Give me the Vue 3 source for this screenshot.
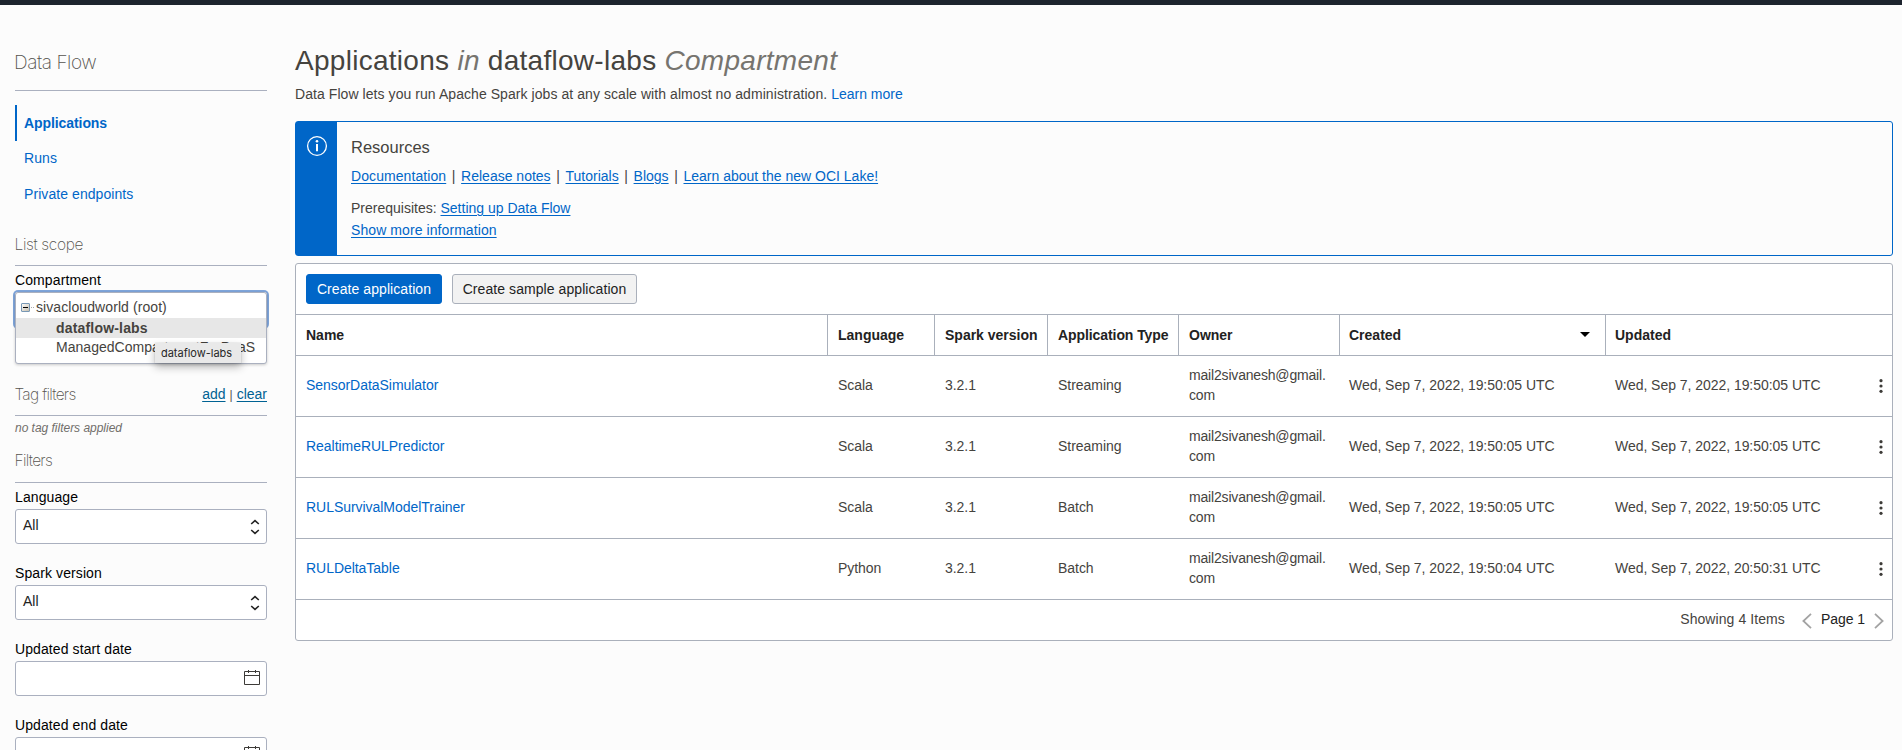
<script setup>
const nav = [
  { label: 'Applications', active: true },
  { label: 'Runs' },
  { label: 'Private endpoints' },
]
const resources = [
  { label: 'Documentation', cls: 'wide' },
  { label: 'Release notes' },
  { label: 'Tutorials' },
  { label: 'Blogs' },
  { label: 'Learn about the new OCI Lake!' },
]
const columns = [
  { label: 'Name' },
  { label: 'Language' },
  { label: 'Spark version' },
  { label: 'Application Type', cls: 'tight' },
  { label: 'Owner' },
  { label: 'Created', sorted: true },
  { label: 'Updated' },
]
const rows = [
  { name: 'SensorDataSimulator', lang: 'Scala', type: 'Streaming', created: '19:50:05', updated: '19:50:05' },
  { name: 'RealtimeRULPredictor', lang: 'Scala', type: 'Streaming', created: '19:50:05', updated: '19:50:05' },
  { name: 'RULSurvivalModelTrainer', lang: 'Scala', type: 'Batch', created: '19:50:05', updated: '19:50:05' },
  { name: 'RULDeltaTable', lang: 'Python', type: 'Batch', created: '19:50:04', updated: '20:50:31' },
]
const selects = ['Language', 'Spark version']
const dates = ['Updated start date', 'Updated end date']
</script>

<template>
  <div class="page">
    <div class="topbar"></div>
    <div class="layout">
      <aside class="sidebar">
        <h2 class="product">Data Flow</h2>
        <nav class="nav">
          <a v-for="n in nav" :key="n.label" class="nav-item" :class="{ active: n.active }">{{ n.label }}</a>
        </nav>

        <h3 class="section scope">List scope</h3>
        <label class="label comp-label">Compartment</label>
        <div class="compartment">
          <div class="tree">
            <div class="node root">
              <svg class="toggle" width="14" height="9" viewBox="0 0 14 9">
                <defs>
                  <linearGradient id="tg" x1="0" y1="0" x2="1" y2="1">
                    <stop offset="0" stop-color="#fff" />
                    <stop offset="1" stop-color="#c3bbaa" />
                  </linearGradient>
                </defs>
                <rect x=".5" y=".5" width="8" height="8" rx=".5" fill="url(#tg)" stroke="#7898b5" />
                <path d="M2 4.5h5" stroke="#000" />
                <path d="M10 4.5h1M12 4.5h1" stroke="#aaa" />
              </svg>
              <span>sivacloudworld (root)</span>
            </div>
            <div class="node child selected">dataflow-labs</div>
            <div class="node child">ManagedCompartmentForPaaS</div>
            <div class="tooltip">dataflow-labs</div>
          </div>
        </div>

        <div class="section tags">
          <h3>Tag filters</h3>
          <span class="tag-actions"><a>add</a><i>|</i><a>clear</a></span>
        </div>
        <div class="none">no tag filters applied</div>

        <h3 class="section filters">Filters</h3>
        <div v-for="s in selects" :key="s" class="field">
          <label class="label">{{ s }}</label>
          <div class="control">
            <span>All</span>
            <svg class="updown" width="10" height="16" viewBox="0 0 10 16" fill="none" stroke="#222" stroke-width="1.6">
              <path d="M1.2 5 5 1.6 8.8 5M1.2 11 5 14.4 8.8 11" />
            </svg>
          </div>
        </div>
        <div v-for="d in dates" :key="d" class="field">
          <label class="label">{{ d }}</label>
          <div class="control">
            <svg class="cal" width="16" height="15" viewBox="0 0 16 15" fill="none" stroke="#3d3b38">
              <path d="M.5 1.5h15v13H.5zM.5 5.5h15M4.5 0v3M11.5 0v3" />
            </svg>
          </div>
        </div>
      </aside>

      <main class="main">
        <h1 class="title">
          Applications <em>in</em> dataflow-labs <em>Compartment</em>
        </h1>
        <p class="desc"><span>Data Flow lets you run Apache Spark jobs at any scale with almost no administration.</span> <a>Learn more</a></p>

        <section class="info">
          <div class="strip">
            <svg width="22" height="22" viewBox="0 0 22 22">
              <circle cx="11" cy="11" r="9.4" fill="none" stroke="#fff" stroke-width="1.3" />
              <path d="M11 9v7.2" stroke="#fff" stroke-width="2" />
              <circle cx="11" cy="6.2" r="1.3" fill="#fff" />
            </svg>
          </div>
          <div class="info-body">
            <h4>Resources</h4>
            <div class="links">
              <template v-for="(r, i) in resources" :key="r.label">
                <i v-if="i">|</i><a :class="r.cls">{{ r.label }}</a>
              </template>
            </div>
            <div class="prereq">Prerequisites: <a>Setting up Data Flow</a></div>
            <div class="more"><a class="wide">Show more information</a></div>
          </div>
        </section>

        <section class="table">
          <div class="toolbar">
            <button class="btn primary">Create application</button>
            <button class="btn">Create sample application</button>
          </div>
          <div class="grid head">
            <div v-for="c in columns" :key="c.label" class="th">
              <span :class="c.cls">{{ c.label }}</span>
              <svg v-if="c.sorted" class="sort" width="10" height="5" viewBox="0 0 10 5"><path d="M0 0h10L5 5z" /></svg>
            </div>
          </div>
          <div v-for="r in rows" :key="r.name" class="grid row">
            <div><a>{{ r.name }}</a></div>
            <div>{{ r.lang }}</div>
            <div>3.2.1</div>
            <div>{{ r.type }}</div>
            <div><span class="mail">mail2sivanesh@gmail.<wbr>com</span></div>
            <div>Wed, Sep 7, 2022, {{ r.created }} UTC</div>
            <div class="last">
              <span>Wed, Sep 7, 2022, {{ r.updated }} UTC</span>
              <svg class="kebab" width="4" height="14" viewBox="0 0 4 14" fill="#3d3b38">
                <circle cx="2" cy="1.7" r="1.6" /><circle cx="2" cy="7" r="1.6" /><circle cx="2" cy="12.3" r="1.6" />
              </svg>
            </div>
          </div>
          <div class="foot">
            <span class="showing">Showing 4 Items</span>
            <svg width="10" height="16" viewBox="0 0 10 16" fill="none" stroke="#a3a3a3" stroke-width="1.8"><path d="M9 .8 1.4 8 9 15.2" /></svg>
            <span class="pg">Page 1</span>
            <svg width="10" height="16" viewBox="0 0 10 16" fill="none" stroke="#a3a3a3" stroke-width="1.8"><path d="M1 .8 8.6 8 1 15.2" /></svg>
          </div>
        </section>
      </main>
    </div>
  </div>
</template>

<style>
html, body { margin: 0; overflow: hidden; background: #fcfcfc; }
</style>

<style scoped>
* { box-sizing: border-box; }
.page {
  height: 750px;
  overflow: hidden;
  background: #fcfcfc;
  color: #45433e;
  font: 14px/20px "Liberation Sans", Arial, sans-serif;
}
h1, h2, h3, h4, p { margin: 0; font-weight: 400; }
a { color: #0066c8; }
.topbar { height: 5px; background: #1d242e; }
.layout { display: flex; padding-left: 15px; }
.sidebar { width: 252px; flex: none; }

.product {
  height: 86px;
  padding-top: 43px;
  border-bottom: 1px solid #aab0bf;
  font: 200 19px/30px Inter, "Liberation Sans", sans-serif;
  letter-spacing: -0.45px;
  text-indent: -1px;
  color: #55534e;
}
.nav { padding-top: 14px; }
.nav-item {
  display: block;
  height: 35.5px;
  padding-left: 9px;
  line-height: 35px;
  letter-spacing: 0.07px;
}
.nav-item:last-child { line-height: 36px; }
.nav-item.active { border-left: 2px solid #0066c8; padding-left: 7px; line-height: 37px; font-weight: 700; letter-spacing: -0.08px; }
.section {
  height: 40px;
  border-bottom: 1px solid #aab0bf;
}
.section, .section h3 {
  font: 200 15.5px/20px Inter, "Liberation Sans", sans-serif;
  letter-spacing: -0.7px;
  text-indent: -0.5px;
  color: #55534e;
}
.section.scope { margin-top: 15.5px; height: 39px; padding-top: 8px; letter-spacing: -0.35px; }
.label { display: block; height: 20px; color: #000; letter-spacing: 0.1px; }
.comp-label { margin-top: 4px; }
.compartment {
  height: 35px;
  margin: 2px 0 0;
  border-radius: 3px;
  box-shadow: 0 0 0 2px #7fa5da;
}
.tree {
  position: relative;
  height: 72px;
  padding-top: 5px;
  background: #fff;
  border: 1px solid #aab0bf;
  border-radius: 3px;
  box-shadow: 0 1px 3px rgba(0, 0, 0, 0.2);
}
.node { height: 20px; line-height: 20px; white-space: nowrap; }
.root { display: flex; align-items: center; padding-left: 5px; letter-spacing: 0.08px; }
.root span { margin-top: -2px; }
.toggle { margin: -2px 1px 0 0; }
.child { height: 19px; line-height: 18px; padding-left: 40px; letter-spacing: 0.03px; }
.selected { height: 20px; line-height: 20px; background: #e7e7e7; font-weight: 700; letter-spacing: 0.18px; }
.tooltip {
  position: absolute;
  left: 139px;
  top: 50px;
  width: 86px;
  height: 20px;
  padding-left: 6px;
  background: #e9e9e9;
  box-shadow: 0 4px 9px rgba(0, 0, 0, 0.28), 0 0 1px rgba(0, 0, 0, 0.25);
  color: #262626;
  font: 11px/21px Inter, sans-serif;
  letter-spacing: -0.02px;
}
.tags { display: flex; justify-content: space-between; margin-top: 57px; height: 32px; }
.section.tags h3 { padding-top: 1px; }
.tag-actions { font: 14px/20px "Liberation Sans", sans-serif; letter-spacing: 0; text-indent: 0; }
.tag-actions a { color: #006293; text-decoration: underline; text-underline-offset: 2px; }
.tag-actions i { margin: 0 4px; font: 12px "Liberation Sans", sans-serif; }
.none { margin-top: 2px; font-size: 12px; font-style: italic; line-height: 20px; color: #716e6a; letter-spacing: -0.02px; }
.section.filters { margin-top: 12px; height: 33px; padding-top: 1px; }
.field { height: 76px; padding-top: 4px; }
.control {
  display: flex;
  align-items: center;
  justify-content: space-between;
  height: 35px;
  margin-top: 2px;
  padding: 0 6px 0 7px;
  background: #fff;
  border: 1px solid #aab0bf;
  border-radius: 3px;
  color: #222;
}
.control span { margin-top: -3px; }
.cal { margin: -3px 0 0 auto; }

.main { flex: none; width: 1598px; margin-left: 28px; }
.title {
  padding-top: 40px;
  height: 77px;
  font-size: 28px;
  line-height: 32px;
  letter-spacing: 0.28px;
  white-space: nowrap;
}
.title em { color: #76746f; }
.desc { height: 39px; padding-top: 2px; line-height: 20px; }
.desc span { letter-spacing: 0.065px; }
.info {
  display: flex;
  height: 135px;
  border: 1px solid #0066c8;
  border-radius: 3px;
}
.strip { width: 41px; flex: none; padding: 13px 0 0 10px; background: #0066c8; }
.strip svg { display: block; }
.info-body { padding: 14px 0 0 14px; }
.info-body a { text-decoration: underline; text-underline-offset: 2px; }
.info-body .wide { letter-spacing: 0.08px; }
.info-body h4 { height: 30px; font-size: 16.5px; line-height: 22px; }
.links { display: flex; height: 32px; }
.links i { font-style: normal; width: 14.9px; text-align: center; }
.prereq { height: 22px; }
.table {
  margin-top: 7px;
  height: 378px;
  background: #fff;
  border: 1px solid #aab0bb;
  border-radius: 3px;
}
.toolbar { display: flex; gap: 10px; height: 51px; padding: 10px; border-bottom: 1px solid #aab0bb; }
.btn {
  width: 185px;
  height: 30px;
  padding: 0;
  border: 1px solid #aab0bb;
  border-radius: 3px;
  background: #f2f2f2;
  color: #222;
  font: 14px/28px "Liberation Sans", sans-serif;
  letter-spacing: 0.07px;
}
.primary { width: 136px; background: #0066c8; border-color: #0066c8; color: #fff; }
.grid {
  display: grid;
  grid-template-columns: 532px 107px 113px 131px 161px 266px 1fr;
  border-bottom: 1px solid #aab0bb;
}
.grid > div { display: flex; align-items: center; padding-left: 10px; white-space: nowrap; }
.grid > div:nth-child(n + 6) { padding-left: 9px; }
.head { height: 41px; }
.th { justify-content: space-between; border-right: 1px solid #aab0bb; font-weight: 700; color: #222; }
.th:last-child { border-right: 0; }
.tight { letter-spacing: -0.08px; }
.sort { margin: -2px 15px 0 0; }
.row { height: 61px; letter-spacing: -0.04px; }
.row > div { padding-bottom: 2px; }
.mail { width: 141px; white-space: normal; letter-spacing: -0.18px; }
.last { justify-content: space-between; }
.kebab { margin: 1px 9px 0 0; }
.foot { display: flex; justify-content: flex-end; align-items: center; height: 40px; padding-right: 8px; }
.foot svg { margin-top: 2px; }
.foot .showing { margin: -3px 17px 0 0; letter-spacing: 0.08px; }
.foot .pg { margin: -3px 9px 0 9px; color: #222; letter-spacing: -0.05px; }
</style>
